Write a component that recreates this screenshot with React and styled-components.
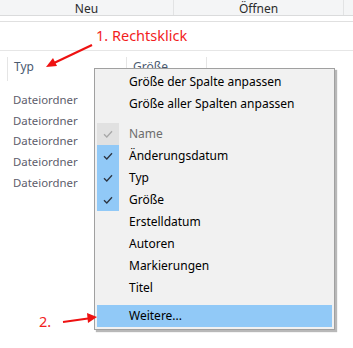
import React from "react";
import styled, { createGlobalStyle } from "styled-components";

const GlobalStyle = createGlobalStyle`
  html, body {
    margin: 0;
    padding: 0;
    background: #fff;
  }
  body {
    font-family: "Noto Sans", "Open Sans", sans-serif;
  }
`;

const StyledWrapper = styled.div`
  position: relative;
  width: 353px;
  height: 348px;
  overflow: hidden;
  background: #fff;
`;

const StyledToolbar = styled.div`
  display: flex;
  height: 15px;
  background: #f4f5f6;
  border-bottom: 1px solid #dadbdc;
`;

const StyledToolCell = styled.div`
  width: ${({ w }) => w}px;
  display: flex;
  justify-content: center;
  align-items: center;
  border-right: 1px solid #e2e3e4;
  font-size: 12px;
  color: #2b2b2b;
  line-height: 15px;
  padding-top: 1px;
  box-sizing: border-box;
`;

const StyledRule = styled.div`
  height: 1px;
  background: ${({ color }) => color || "#e3e3e3"};
  margin-top: ${({ top }) => top || 0}px;
`;

const StyledNote = styled.div`
  height: 28px;
  display: flex;
  align-items: center;
  padding-left: 96px;
  color: #f21d1d;
  font-size: 14.5px;
  padding-bottom: 2px;
  box-sizing: border-box;
`;

const StyledHeader = styled.div`
  display: flex;
  height: 30px;
  align-items: stretch;
`;

const StyledHeadCell = styled.div`
  width: ${({ w }) => w}px;
  border-left: 1px solid ${({ edge }) => (edge ? "transparent" : "#e5e5e5")};
  margin-top: 6px;
  padding-left: ${({ edge }) => (edge ? 0 : 6)}px;
  font-size: 12px;
  color: #4a5a70;
  display: flex;
  align-items: center;
  padding-bottom: 6px;
  box-sizing: border-box;
`;

const StyledRows = styled.div`
  display: flex;
  flex-direction: column;
  padding-top: 8px;
  padding-left: 13px;
`;

const StyledRow = styled.div`
  height: 20.8px;
  display: flex;
  align-items: center;
  font-size: 11.4px;
  color: #5d5d6b;
`;

const StyledMenu = styled.div`
  position: absolute;
  left: 94px;
  top: 68px;
  width: 241px;
  height: 262px;
  box-sizing: border-box;
  background: #f1f1f1;
  border: 1px solid #a0a0a0;
  padding: 2px 2px;
  box-shadow: 2px 2px 1px rgba(0, 0, 0, 0.28);
  display: flex;
  flex-direction: column;
`;

const StyledItem = styled.div`
  display: flex;
  height: 22px;
  align-items: center;
  background: ${({ active }) => (active ? "#91c9f7" : "transparent")};
  font-size: 12px;
  color: ${({ disabled }) => (disabled ? "#6d6d6d" : "#000")};
`;

const StyledCheck = styled.div`
  width: 22px;
  height: 22px;
  display: flex;
  align-items: center;
  justify-content: center;
  background: ${({ state }) =>
    state === "on" ? "#91c9f7" : state === "off" ? "#e1e1e1" : "transparent"};
`;

const StyledLabel = styled.span`
  padding-left: 10px;
  line-height: 22px;
`;

const StyledSeparator = styled.div`
  height: 1px;
  background: #d7d7d7;
  margin: ${({ m }) => m} 0 ${({ m }) => m} 29px;
`;

const StyledArrows = styled.svg`
  position: absolute;
  left: 0;
  top: 0;
  pointer-events: none;
`;

const StyledStep = styled.div`
  position: absolute;
  left: 39px;
  top: 311px;
  color: #f21d1d;
  font-size: 14.5px;
`;

const Check = ({ color }) => (
  <svg width="10" height="8" viewBox="0 0 10 8">
    <path d="M1 4.2 L3.8 7 L9 1.2" fill="none" stroke={color} strokeWidth="1.3" />
  </svg>
);

const Item = ({ check, children, active, disabled }) => (
  <StyledItem active={active} disabled={disabled}>
    <StyledCheck state={check}>
      {check === "on" && <Check color="#2c3440" />}
      {check === "off" && <Check color="#a8a8a8" />}
    </StyledCheck>
    <StyledLabel>{children}</StyledLabel>
  </StyledItem>
);

const App = () => {
  return (
    <StyledWrapper>
      <GlobalStyle />
      <StyledToolbar>
        <StyledToolCell w={174}>Neu</StyledToolCell>
        <StyledToolCell w={170}>Öffnen</StyledToolCell>
      </StyledToolbar>
      <StyledRule top={5} color="#e0e0e0" />
      <StyledNote>1. Rechtsklick</StyledNote>
      <StyledRule color="#e6e6e6" />
      <StyledHeader>
        <StyledHeadCell w={7} edge />
        <StyledHeadCell w={119}>Typ</StyledHeadCell>
        <StyledHeadCell w={80}>Größe</StyledHeadCell>
        <StyledHeadCell w={60} />
      </StyledHeader>
      <StyledRows>
        {[0, 1, 2, 3, 4].map((i) => (
          <StyledRow key={i}>Dateiordner</StyledRow>
        ))}
      </StyledRows>

      <StyledMenu>
        <Item>Größe der Spalte anpassen</Item>
        <Item>Größe aller Spalten anpassen</Item>
        <StyledSeparator m="4px" />
        <Item check="off" disabled>
          Name
        </Item>
        <Item check="on">Änderungsdatum</Item>
        <Item check="on">Typ</Item>
        <Item check="on">Größe</Item>
        <Item>Erstelldatum</Item>
        <Item>Autoren</Item>
        <Item>Markierungen</Item>
        <Item>Titel</Item>
        <StyledSeparator m="3px" />
        <Item active>Weitere...</Item>
      </StyledMenu>

      <StyledArrows width="353" height="348" viewBox="0 0 353 348">
        <line x1="92" y1="45" x2="54" y2="63" stroke="#ee1111" strokeWidth="2.2" />
        <polygon points="46,67 53,58 57,66" fill="#ee1111" />
        <line x1="63" y1="322" x2="88" y2="318.5" stroke="#ee1111" strokeWidth="2.2" />
        <polygon points="97,317 87,313 88,323" fill="#ee1111" />
      </StyledArrows>
      <StyledStep>2.</StyledStep>
    </StyledWrapper>
  );
};

export default App;
